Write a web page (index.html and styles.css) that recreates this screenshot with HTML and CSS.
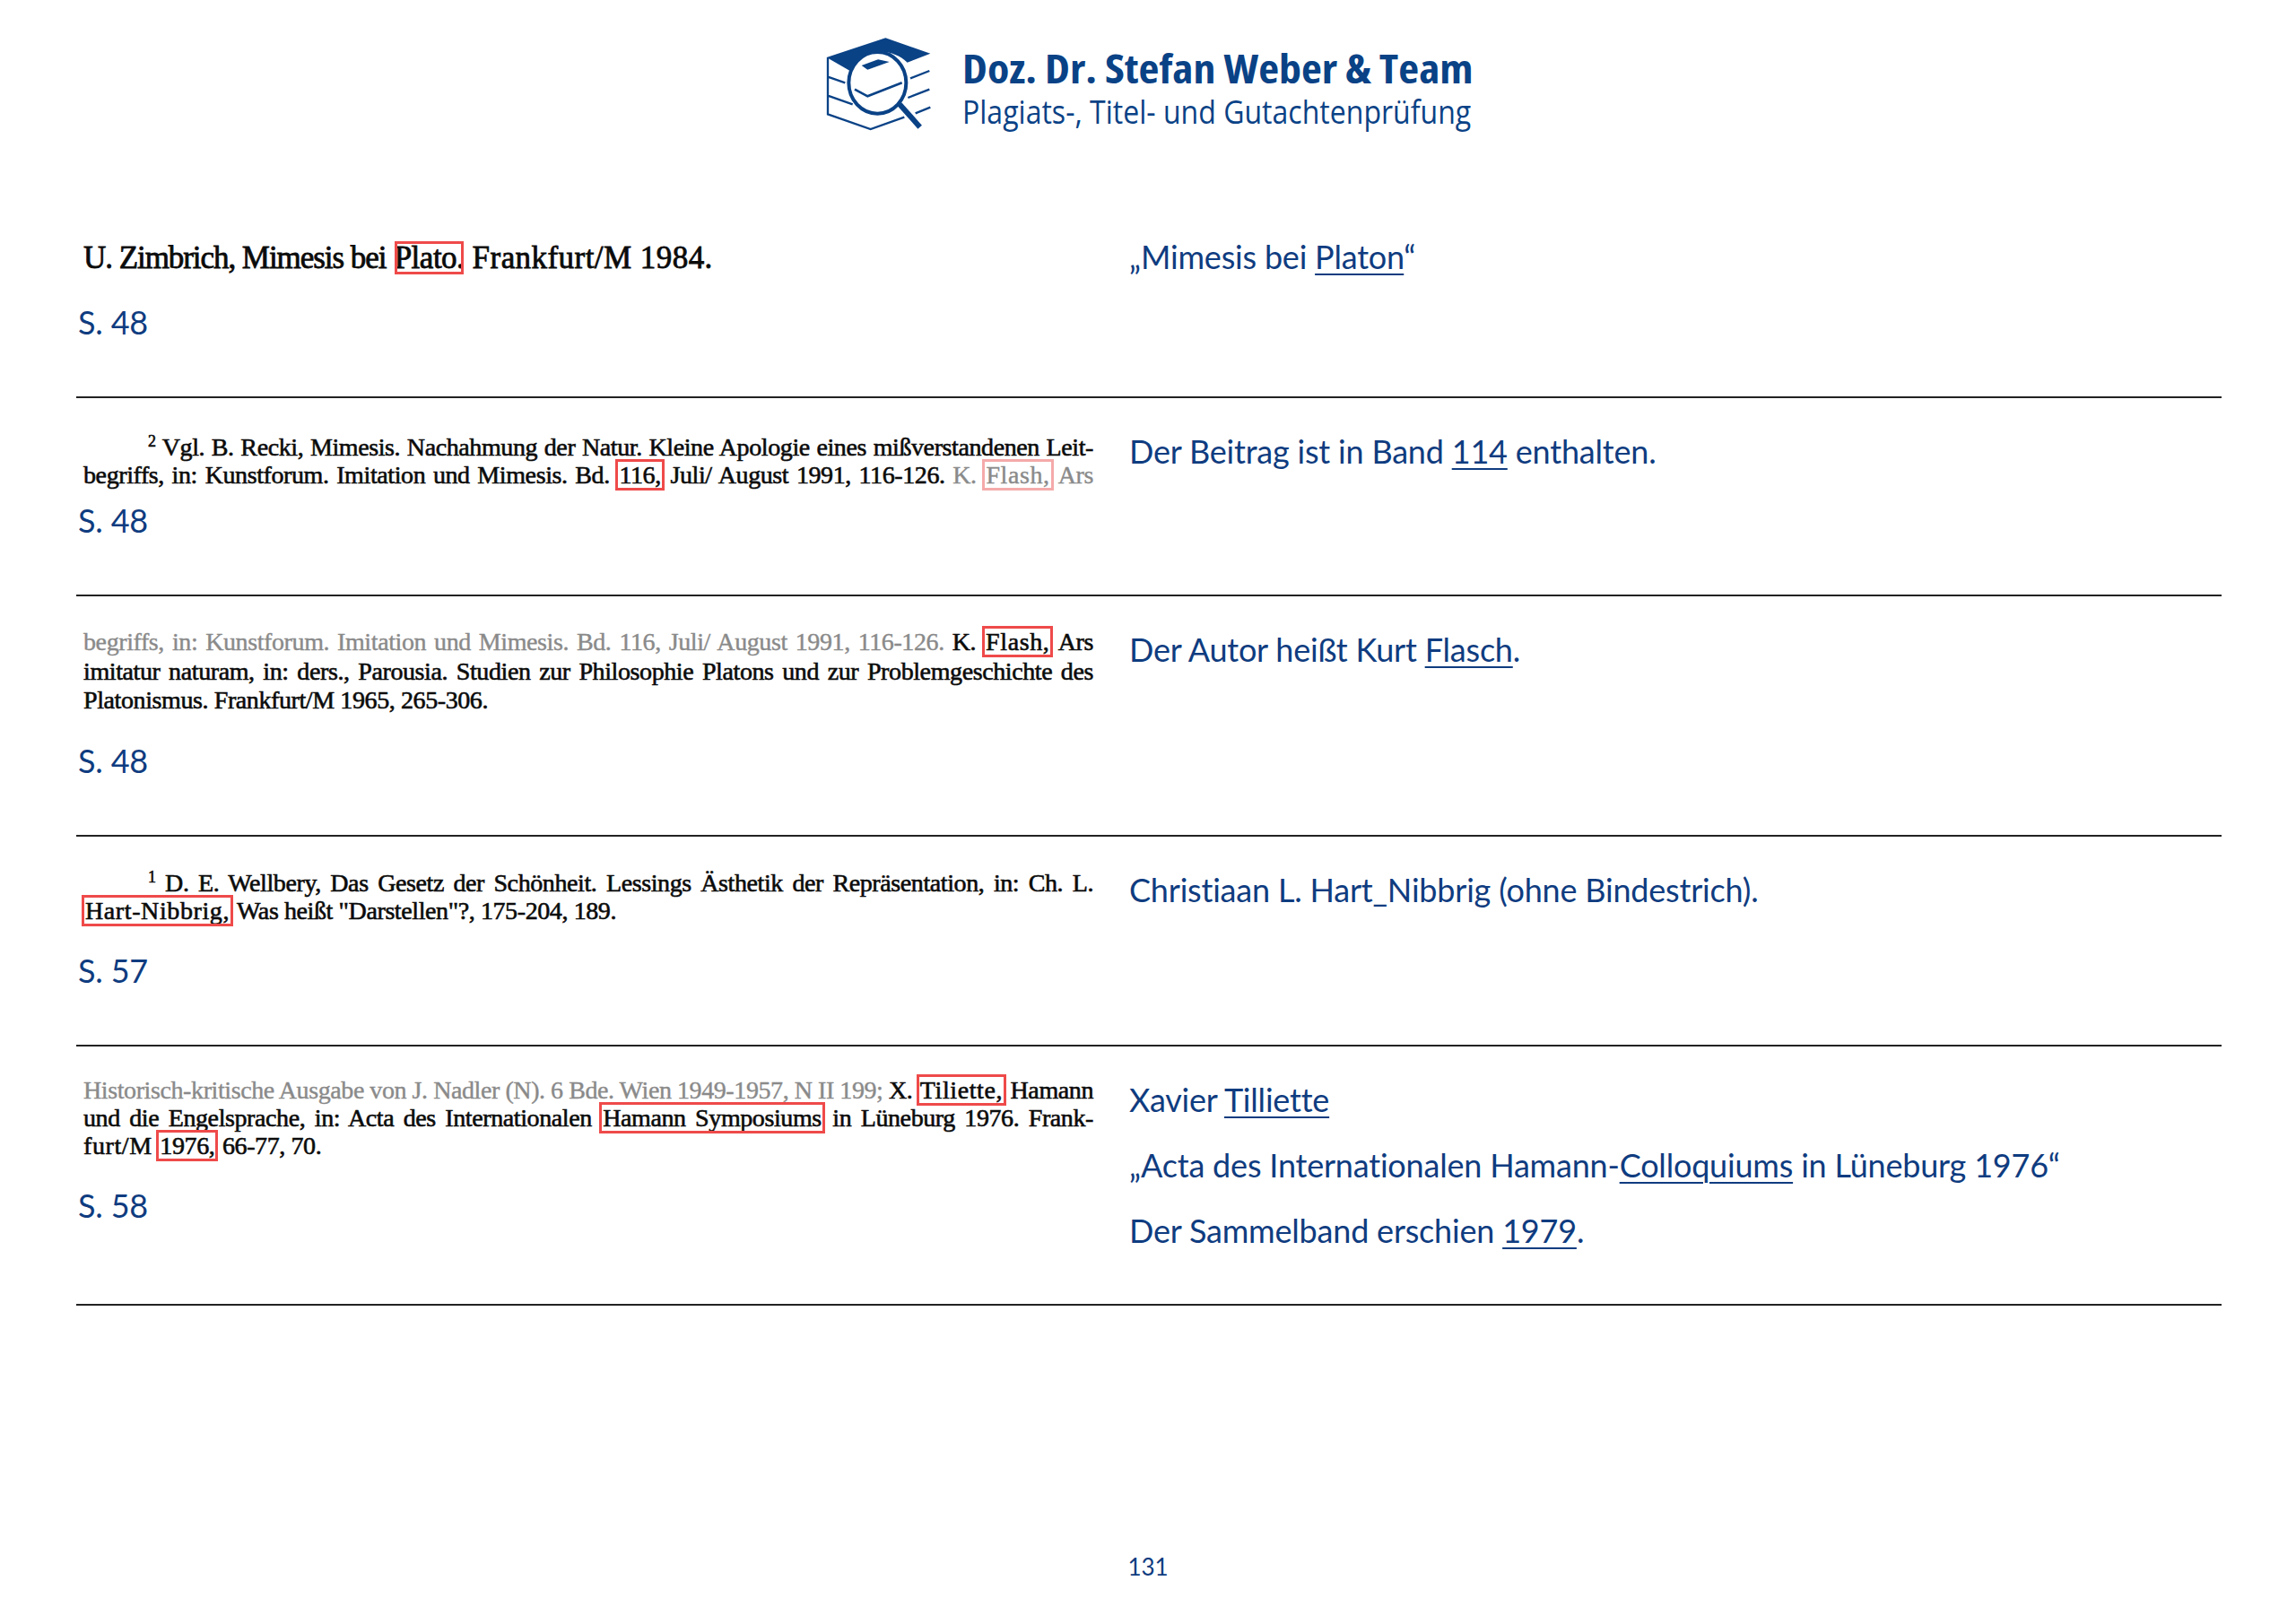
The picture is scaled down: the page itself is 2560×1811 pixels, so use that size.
FILE: index.html
```html
<!DOCTYPE html>
<html lang="de">
<head>
<meta charset="utf-8">
<title>Doz. Dr. Stefan Weber &amp; Team</title>
<link rel="stylesheet" href="styles.css">
</head>
<body>
<div class="page">
  <header class="brand">
    <svg class="logo" viewBox="0 0 480 390" aria-hidden="true">
      <path class="fill" d="M68 105 265 40 415 92 338 122C310 96 270 82 235 88 195 94 165 118 150 152Z"/>
      <path class="fill" d="M185 132 240 112 278 120 205 146Z"/>
      <ellipse class="ring" cx="238" cy="190" rx="96" ry="103"/>
      <path class="thin" d="M162 212 205 235 320 190"/>
      <path class="handle" d="M312 262 380 338"/>
      <path class="book" d="M72 105V295L215 345 328 305M72 170 130 190M72 233 155 262M348 175 412 150M340 240 412 212M365 292 415 272"/>
    </svg>
    <div class="brand-text">
      <div class="brand-title">Doz. Dr. Stefan Weber &amp; Team</div>
      <div class="brand-sub">Plagiats-, Titel- und Gutachtenprüfung</div>
    </div>
  </header>

  <section class="row row-1">
    <div class="left">
      <div class="scan scan-large">
        <div class="ln ln-free"><span class="tight">U. Zimbrich, Mimesis bei</span> <span class="mark">Plato.</span> <span class="loose">Frankfurt/M 1984.</span></div>
      </div>
      <p class="src">S. 48</p>
    </div>
    <div class="right"><p>„Mimesis bei <u>Platon</u>“</p></div>
  </section>

  <section class="row row-2">
    <div class="left">
      <div class="scan">
        <div class="ln ln-indent"><sup>2</sup> Vgl. B. Recki, Mimesis. Nachahmung der Natur. Kleine Apologie eines mißverstandenen Leit-</div>
        <div class="ln">begriffs, in: Kunstforum. Imitation und Mimesis. Bd. <span class="mark">116,</span> Juli/ August 1991, 116-126. <span class="gray">K. <span class="mark mark-faint wide">Flash,</span> Ars</span></div>
      </div>
      <p class="src">S. 48</p>
    </div>
    <div class="right"><p>Der Beitrag ist in Band <u>114</u> enthalten.</p></div>
  </section>

  <section class="row row-3">
    <div class="left">
      <div class="scan">
        <div class="ln"><span class="gray">begriffs, in: Kunstforum. Imitation und Mimesis. Bd. 116, Juli/ August 1991, 116-126.</span> K. <span class="mark wide">Flash,</span> Ars</div>
        <div class="ln">imitatur naturam, in: ders., Parousia. Studien zur Philosophie Platons und zur Problemgeschichte des</div>
        <div class="ln ln-free">Platonismus. Frankfurt/M 1965, 265-306.</div>
      </div>
      <p class="src">S. 48</p>
    </div>
    <div class="right"><p>Der Autor heißt Kurt <u>Flasch</u>.</p></div>
  </section>

  <section class="row row-4">
    <div class="left">
      <div class="scan">
        <div class="ln ln-indent"><sup>1</sup> D. E. Wellbery, Das Gesetz der Schönheit. Lessings Ästhetik der Repräsentation, in: Ch. L.</div>
        <div class="ln ln-free"><span class="mark wide">Hart-Nibbrig,</span> Was heißt "Darstellen"?, 175-204, 189.</div>
      </div>
      <p class="src">S. 57</p>
    </div>
    <div class="right"><p>Christiaan L. Hart_Nibbrig (ohne Bindestrich).</p></div>
  </section>

  <section class="row row-5">
    <div class="left">
      <div class="scan">
        <div class="ln"><span class="gray">Historisch-kritische Ausgabe von J. Nadler (N). 6 Bde. Wien 1949-1957, N II 199;</span> X. <span class="mark wide">Tiliette,</span> Hamann</div>
        <div class="ln">und die Engelsprache, in: Acta des Internationalen <span class="mark">Hamann Symposiums</span> in Lüneburg 1976. Frank-</div>
        <div class="ln ln-free"><span class="wide">furt/M</span> <span class="mark">1976,</span> 66-77, 70.</div>
      </div>
      <p class="src">S. 58</p>
    </div>
    <div class="right">
      <p>Xavier <u>Tilliette</u></p>
      <p>„Acta des Internationalen Hamann-<u>Colloquiums</u> in Lüneburg 1976“</p>
      <p>Der Sammelband erschien <u>1979</u>.</p>
    </div>
  </section>

  <footer class="folio">131</footer>
</div>
</body>
</html>
```
FILE: styles.css
```css
* { box-sizing: border-box; }
html, body { margin: 0; padding: 0; background: #fff; }
body { font-family: "Lato", "Liberation Sans", sans-serif; color: #0f3c80; font-variant-ligatures: none; }
.page { width: 2560px; height: 1811px; padding: 43px 83px 0 85px; position: relative; }

.brand { display: flex; justify-content: center; align-items: center; gap: 35px; height: 102px; margin-bottom: 118px; }
.logo { width: 160px; height: 130px; margin: -14px -21px -14px -22px; flex: none; }
.logo .fill { fill: #0a4286; }
.logo .ring { fill: none; stroke: #0a4286; stroke-width: 12; }
.logo .thin { fill: none; stroke: #0a4286; stroke-width: 8; }
.logo .handle { fill: none; stroke: #0a4286; stroke-width: 18; }
.logo .book { fill: none; stroke: #0a4286; stroke-width: 7; }
.brand-text { width: 568px; color: #0a4286; font-family: "Open Sans", sans-serif; white-space: nowrap; padding-top: 11px; }
.brand-title { font-size: 44px; font-weight: 700; line-height: 50px; font-stretch: 75%; transform: scaleX(1.135); transform-origin: left center; }
.brand-sub { font-size: 36px; line-height: 48px; transform: scaleX(0.89); transform-origin: left center; }

.row { display: grid; grid-template-columns: 1174px 1fr; border-bottom: 2px solid #222; }
.left { padding-left: 8px; }
.left .src { margin: 0 0 0 -6px; font-size: 36px; line-height: 46px; padding-bottom: 60px; letter-spacing: -0.2px; }
.right { padding-top: 36px; padding-bottom: 32px; }
.right p { margin: 0 0 26px; font-size: 36px; line-height: 47px; white-space: nowrap; letter-spacing: -0.2px; }
.right u { text-decoration-thickness: 2px; text-underline-offset: 5px; }

.scan { width: 1126px; font-family: "Liberation Serif", serif; font-size: 28px; letter-spacing: -0.4px; word-spacing: -2px; line-height: 31px; color: #0b0b0b; -webkit-text-stroke: 0.6px #0b0b0b; padding-top: 40px; padding-bottom: 28px; }
.ln { text-align: justify; text-align-last: justify; }
.ln-indent { padding-left: 72px; }
.ln-free { text-align-last: left; word-spacing: 0; }
.ln sup { font-size: 18px; line-height: 0; }
.gray { color: #8a8a8a; -webkit-text-stroke: 0.4px #8a8a8a; }
.mark { outline: 3px solid #ef4a4a; outline-offset: -1px; padding: 0 2px; }
.mark-faint { outline-color: #f5aaaa; }
.wide { letter-spacing: 0.6px; }

.scan-large { font-size: 35px; letter-spacing: -0.5px; padding-top: 5px; padding-bottom: 28px; line-height: 40px; -webkit-text-stroke: 0.8px #0b0b0b; }
.scan-large .mark { outline-offset: -4px; padding: 0 1px; }
.tight { letter-spacing: -1.05px; }
.loose { letter-spacing: 0.45px; }

.row-1 .right { padding-top: 0; }
.row-2 .scan { padding-top: 39px; padding-bottom: 12px; }
.row-3 .scan { padding-top: 35px; padding-bottom: 27px; line-height: 32.5px; }
.row-4 .scan { padding-top: 36px; }
.row-5 .scan { padding-top: 33px; }

.folio { position: absolute; left: 0; right: 0; top: 1731px; text-align: center; font-size: 26px; line-height: 32px; }
```
